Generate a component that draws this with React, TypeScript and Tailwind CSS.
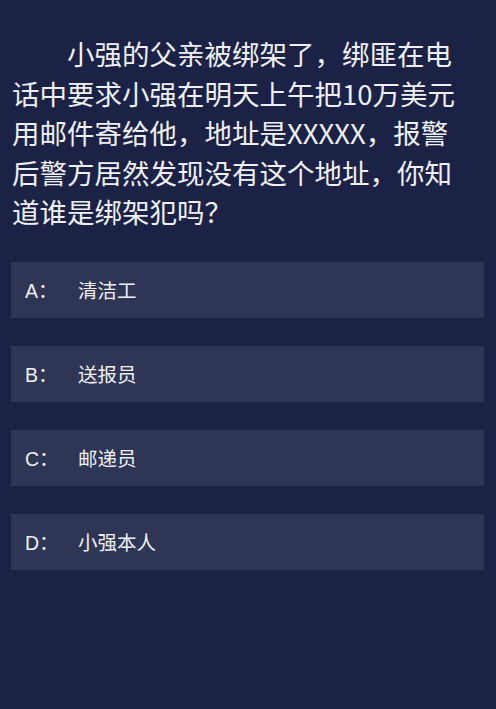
const options = [
  { key: 'A', text: '清洁工' },
  { key: 'B', text: '送报员' },
  { key: 'C', text: '邮递员' },
  { key: 'D', text: '小强本人' },
]

export default function App() {
  return (
    <div
      className="w-[496px] h-[709px] bg-[#1b2246] text-[#eef0f5]"
      style={{ fontFamily: '"Noto Sans CJK SC", "Noto Sans", sans-serif' }}
    >
      <p className="pl-3 pr-7 pt-[34px] text-[27.5px] leading-[39.5px] indent-[55px]">
        小强的父亲被绑架了，绑匪在电话中要求小强在明天上午把10万美元用邮件寄给他，地址是XXXXX，报警后警方居然发现没有这个地址，你知道谁是绑架犯吗？
      </p>
      <div className="mt-[30px] flex flex-col gap-[28px] px-[11px] pr-[12px]">
        {options.map((o) => (
          <div key={o.key} className="flex h-[56px] items-center bg-[#2e3555] pl-[14px] pt-[3px] text-[19.5px]">
            <div className="flex items-baseline">
              <span className="w-[53px]">
                <span style={{ fontFamily: '"Liberation Sans", Arial, sans-serif' }}>{o.key}</span>：
              </span>
              <span>{o.text}</span>
            </div>
          </div>
        ))}
      </div>
    </div>
  )
}
